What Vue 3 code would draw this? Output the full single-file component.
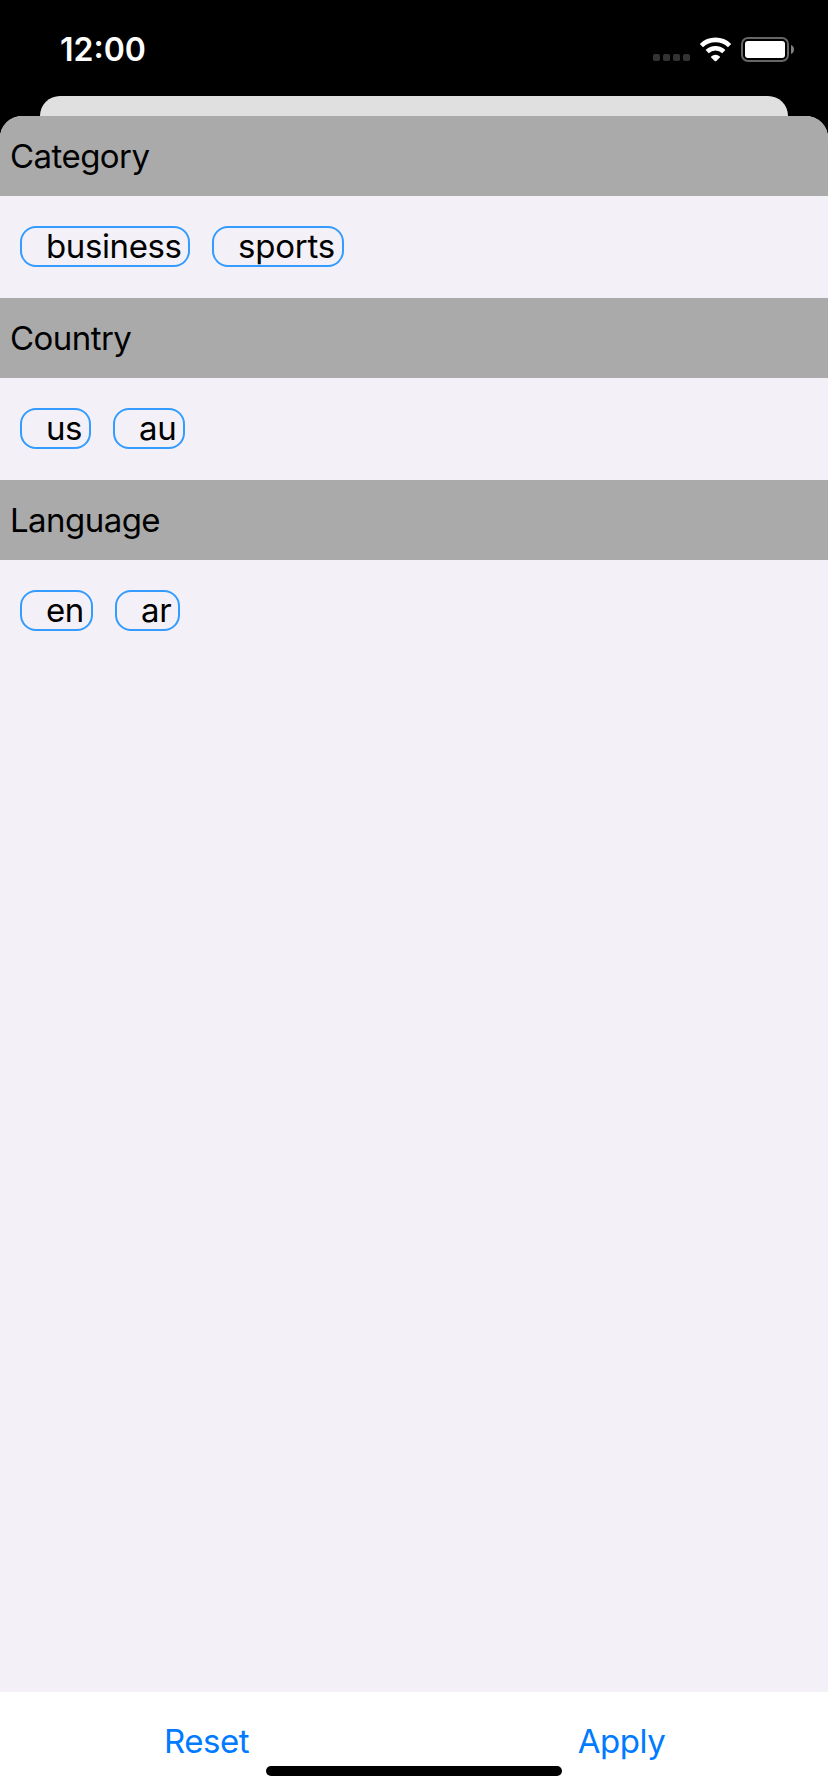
<script setup>
const sections = [
  { title: 'Category', options: ['business', 'sports'] },
  { title: 'Country', options: ['us', 'au'] },
  { title: 'Language', options: ['en', 'ar'] },
]
</script>

<template>
  <div class="screen">
    <header class="status">
      <span class="time">12:00</span>
      <svg class="icons" width="146" height="32" viewBox="650 34 146 32">
        <g fill="#333">
          <rect x="653" y="54" width="7" height="7" rx="1.8" />
          <rect x="663" y="54" width="7" height="7" rx="1.8" />
          <rect x="673" y="54" width="7" height="7" rx="1.8" />
          <rect x="683" y="54" width="7" height="7" rx="1.8" />
        </g>
        <g fill="none" stroke="#fff" stroke-width="4.6">
          <path d="M701.4 45.6a20.3 20.3 0 0 1 28.2 0" />
          <path d="M707.2 51.6a12 12 0 0 1 16.6 0" />
        </g>
        <path d="M711.2 56.4a6.6 6.6 0 0 1 8.6 0q.6.6 0 1.2l-3.5 3.3q-.8.7-1.6 0l-3.5-3.3q-.6-.6 0-1.2z" fill="#fff" />
        <rect x="742" y="38" width="46" height="23" rx="6" fill="none" stroke="#666" stroke-width="2" />
        <rect x="745" y="41" width="40" height="17" rx="3" fill="#fff" />
        <path d="M791 45c4 1.2 4 7.800 0 9z" fill="#808080" />
      </svg>
    </header>
    <div class="behind"></div>
    <main class="sheet">
      <section v-for="section in sections" :key="section.title">
        <h2 class="heading">{{ section.title }}</h2>
        <div class="options">
          <button v-for="option in section.options" :key="option" class="chip" :class="option">{{ option }}</button>
        </div>
      </section>
      <footer class="actions">
        <button class="action reset">Reset</button>
        <button class="action apply">Apply</button>
        <div class="home"></div>
      </footer>
    </main>
  </div>
</template>

<style>
body {
  margin: 0;
  background: #000;
}
</style>

<style scoped>
.screen {
  width: 828px;
  height: 1792px;
  display: flex;
  flex-direction: column;
  overflow: hidden;
  background: #000;
  color: #000;
  font-family: Inter, "Liberation Sans", sans-serif;
  font-size: 33px;
}
.status {
  height: 96px;
  flex: none;
  box-sizing: border-box;
  padding: 34px 32px 0 60px;
  display: flex;
  justify-content: space-between;
  align-items: flex-start;
}
.time {
  color: #fff;
  font-size: 32px;
  font-weight: 600;
  line-height: 32px;
  letter-spacing: 0;
}
.icons {
  display: block;
}
.behind {
  height: 20px;
  flex: none;
  margin: 0 40px;
  border-radius: 20px 20px 0 0;
  background: #e0e0e0;
}
.sheet {
  flex: 1;
  display: flex;
  flex-direction: column;
  overflow: hidden;
  border-radius: 22px 22px 0 0;
  background: #f3f1f7;
}
.heading {
  margin: 0;
  height: 80px;
  padding-left: 10px;
  background: #aaa;
  font-size: 33px;
  font-weight: 400;
  line-height: 80px;
  letter-spacing: -0.55px;
}
.options {
  height: 102px;
  box-sizing: border-box;
  padding: 30px 20px 0;
  display: flex;
  gap: 22px;
}
button {
  font: inherit;
  margin: 0;
  padding: 0;
  border: 0;
  background: none;
}
.chip {
  box-sizing: border-box;
  height: 41px;
  padding-left: 24px;
  border: 2px solid #349cff;
  border-radius: 16px;
  color: #000;
  line-height: 37px;
  text-align: left;
  white-space: nowrap;
  letter-spacing: -0.4px;
}
.business { width: 170px; }
.sports {
  width: 132px;
  letter-spacing: -0.2px;
}
.us { width: 71px; }
.au { width: 72px; }
.en { width: 73px; }
.ar { width: 65px; }
.actions {
  position: relative;
  height: 100px;
  margin-top: auto;
  display: flex;
  background: #fff;
}
.action {
  flex: 1;
  height: 98px;
  color: #007aff;
  line-height: 98px;
  text-align: center;
  letter-spacing: -0.5px;
}
.reset {
  padding-right: 2px;
}
.home {
  position: absolute;
  left: 266px;
  bottom: 16px;
  width: 296px;
  height: 10px;
  border-radius: 5px;
  background: #000;
}
</style>
